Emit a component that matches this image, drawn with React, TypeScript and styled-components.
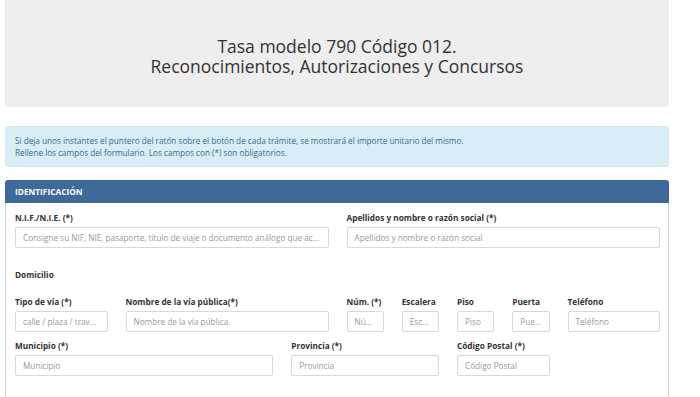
import React from "react";
import styled, { createGlobalStyle } from "styled-components";

const Global = createGlobalStyle`
  html, body { margin: 0; padding: 0; background: #fff; }
  body { font-family: "Open Sans", "Noto Sans", sans-serif; color: #333; }
  * { box-sizing: border-box; }
`;

const Page = styled.div`
  width: 664px;
  margin-left: 5px;
  padding-bottom: 40px;
`;

const Jumbo = styled.div`
  height: 107px;
  background: #eeeeee;
  border-radius: 0 0 4px 4px;
  display: flex;
  flex-direction: column;
  align-items: center;
  justify-content: center;
  padding-top: 4px;
`;

const Title = styled.div`
  font-size: 17.5px;
  line-height: 20px;
  color: #333;
  text-align: center;
`;

const Info = styled.div`
  margin-top: 19px;
  height: 41px;
  background: #d9edf7;
  border: 1px solid #cfe8f2;
  border-radius: 3px;
  padding: 8px 9px;
  color: #31708f;
  font-size: 8.2px;
  line-height: 12px;
`;

const Panel = styled.div`
  margin-top: 13px;
  border: 1px solid #c8d0d8;
  border-radius: 3px 3px 0 0;
  min-height: 260px;
`;

const PanelHead = styled.div`
  height: 23px;
  margin: -1px -1px 0;
  background: #3e6a9a;
  border-radius: 3px 3px 0 0;
  color: #fff;
  font-weight: 700;
  font-size: 8.3px;
  line-height: 23px;
  padding-left: 10px;
`;

const PanelBody = styled.div`
  padding: 9px 8px 0 9px;
`;

const Grid = styled.div<{ $mt?: number }>`
  display: grid;
  grid-template-columns: repeat(12, 1fr);
  column-gap: 18px;
  margin-top: ${(p) => p.$mt ?? 0}px;
`;

const Field = styled.div<{ $span: number }>`
  grid-column: span ${(p) => p.$span};
  min-width: 0;
`;

const Label = styled.div`
  font-size: 8.25px;
  font-weight: 700;
  line-height: 12px;
  color: #333;
  margin-bottom: 3px;
  white-space: nowrap;
`;

const Section = styled.div`
  font-size: 8.25px;
  font-weight: 700;
  line-height: 12px;
  color: #333;
  margin-top: 21px;
`;

const Input = styled.div`
  height: 21px;
  border: 1px solid #d9d9d9;
  border-radius: 2px;
  padding: 0 6px 0 7px;
  font-size: 8.2px;
  line-height: 19px;
  color: #999;
  white-space: nowrap;
  overflow: hidden;
  text-overflow: ellipsis;
`;

type F = { span: number; label: string; ph: string };

const FieldBox = ({ span, label, ph }: F) => (
  <Field $span={span}>
    <Label>{label}</Label>
    <Input>{ph}</Input>
  </Field>
);

export default function App() {
  return (
    <Page>
      <Global />
      <Jumbo>
        <Title>Tasa modelo 790 Código 012.</Title>
        <Title>Reconocimientos, Autorizaciones y Concursos</Title>
      </Jumbo>
      <Info>
        Si deja unos instantes el puntero del ratón sobre el botón de cada trámite, se mostrará el importe unitario del mismo.
        <br />
        Rellene los campos del formulario. Los campos con (*) son obligatorios.
      </Info>
      <Panel>
        <PanelHead>IDENTIFICACIÓN</PanelHead>
        <PanelBody>
          <Grid>
            <FieldBox span={6} label="N.I.F./N.I.E. (*)" ph="Consigne su NIF, NIE, pasaporte, título de viaje o documento análogo que acredite su identidad" />
            <FieldBox span={6} label="Apellidos y nombre o razón social (*)" ph="Apellidos y nombre o razón social" />
          </Grid>
          <Section>Domicilio</Section>
          <Grid $mt={15}>
            <FieldBox span={2} label="Tipo de vía (*)" ph="calle / plaza / travesía" />
            <FieldBox span={4} label="Nombre de la vía pública(*)" ph="Nombre de la vía pública." />
            <FieldBox span={1} label="Núm. (*)" ph="Número" />
            <FieldBox span={1} label="Escalera" ph="Escalera" />
            <FieldBox span={1} label="Piso" ph="Piso" />
            <FieldBox span={1} label="Puerta" ph="Puerta" />
            <FieldBox span={2} label="Teléfono" ph="Teléfono" />
          </Grid>
          <Grid $mt={8}>
            <FieldBox span={5} label="Municipio (*)" ph="Municipio" />
            <FieldBox span={3} label="Provincia (*)" ph="Provincia" />
            <FieldBox span={2} label="Código Postal (*)" ph="Código Postal" />
          </Grid>
        </PanelBody>
      </Panel>
    </Page>
  );
}
